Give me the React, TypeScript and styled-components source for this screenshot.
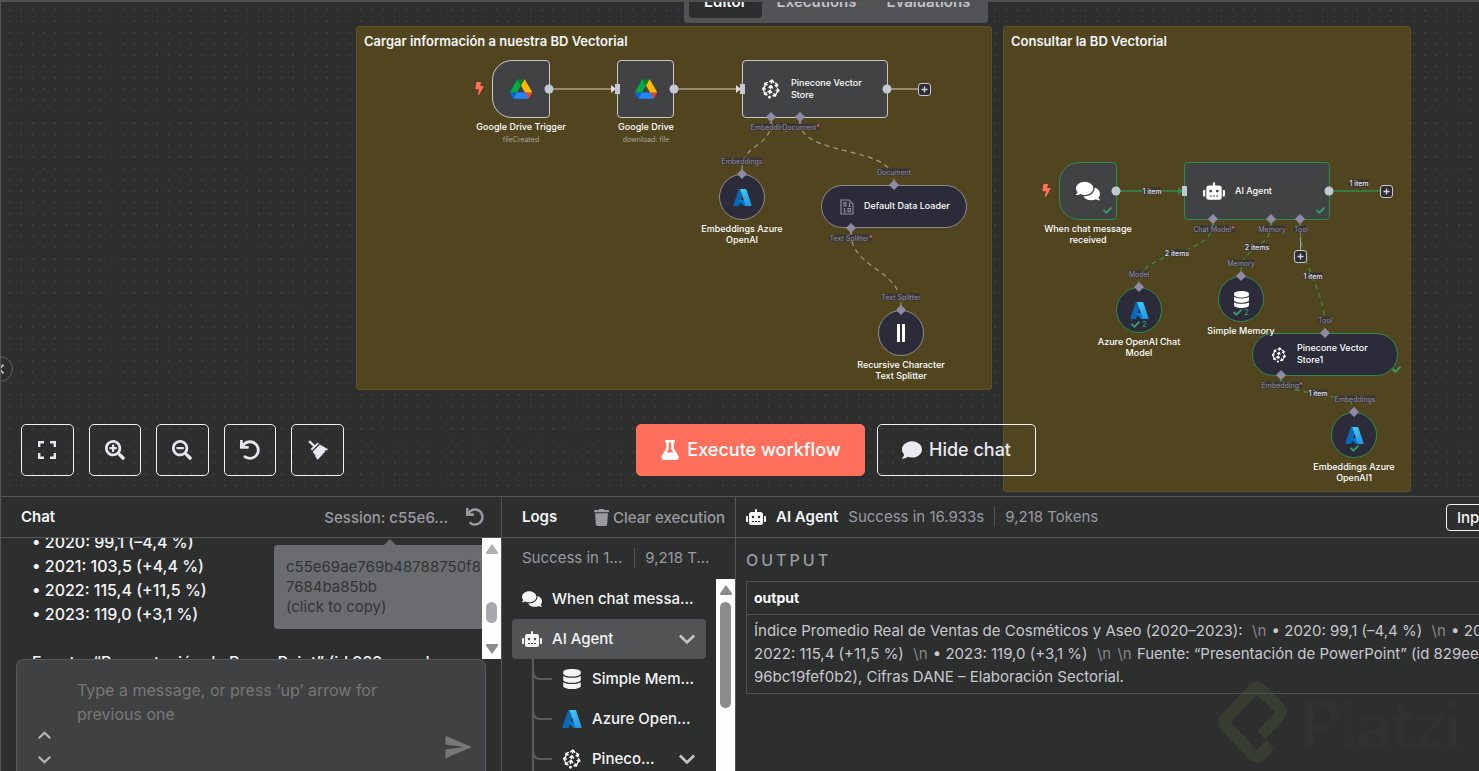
import React from 'react';
import styled, { createGlobalStyle, css } from 'styled-components';
import {
  FaBolt,
  FaCheck,
  FaComment,
  FaComments,
  FaDatabase,
  FaFlask,
  FaRobot,
  FaSearchMinus,
  FaSearchPlus,
  FaTrash,
  FaUndo,
} from 'react-icons/fa';
import { MdSend } from 'react-icons/md';

const c = {
  bg: '#2d2e2e',
  line: '#545555',
  sticky: '#51451f',
  stickyBorder: '#5e5122',
  node: '#414244',
  sub: '#2b2b39',
  nodeBorder: '#c9c8c4',
  subBorder: '#8f8d8c',
  green: '#2f8a50',
  check: '#35a274',
  handle: '#c4c8d4',
  diamond: '#8f8ba6',
  white: '#ffffff',
  text: '#f4f5f7',
  muted: '#9a9ba1',
  coral: '#ff6f5c',
};

const GlobalStyle = createGlobalStyle`
  *, *::before, *::after { box-sizing: border-box; }
  body {
    margin: 0;
    background: ${c.bg};
    color: ${c.text};
    font-family: Inter, "Liberation Sans", sans-serif;
  }
  button, textarea { font: inherit; color: inherit; }
  svg { display: block; flex: none; }
`;

const Page = styled.div`
  display: flex;
  flex-direction: column;
  height: 100vh;
  overflow: hidden;
  border-left: 1px solid ${c.line};
`;

/* ---------- canvas ---------- */

const Canvas = styled.main`
  position: relative;
  flex: 1;
  min-height: 0;
  overflow: hidden;
  border-top: 2px solid #505152;
`;

const Flow = styled.div`
  position: absolute;
  top: -2px;
  left: -1px;
`;

const Dots = styled.svg`
  position: absolute;
  inset: 0;
  width: 100%;
  height: 100%;
`;

const Wires = styled.svg`
  position: absolute;
  top: 0;
  left: 0;
`;

const Tabs = styled.nav`
  position: absolute;
  top: -16px;
  left: 683px;
  display: flex;
  padding: 4px 3px 5px 5px;
  background: #525355;
  border-radius: 4px;
`;

const Tab = styled.button<{ $active?: boolean }>`
  height: 28px;
  padding: 0 15px 4px;
  border: 0;
  border-radius: 4px;
  background: ${(p) => (p.$active ? c.bg : 'transparent')};
  color: ${(p) => (p.$active ? c.white : '#c0c2cb')};
  font-size: 15px;
  font-weight: 600;
  line-height: 24px;
`;

const Sticky = styled.section<{ $x: number; $w: number; $h: number }>`
  position: absolute;
  left: ${(p) => p.$x}px;
  top: 26px;
  width: ${(p) => p.$w}px;
  height: ${(p) => p.$h}px;
  padding: 6px 7px;
  border: 1px solid ${c.stickyBorder};
  border-radius: 3px;
  background: ${c.sticky};
`;

const StickyTitle = styled.h2`
  margin: 0;
  font-size: 13px;
  font-weight: 600;
  line-height: 16px;
  white-space: nowrap;
`;

type Shape = 'square' | 'trigger' | 'pill' | 'circle';

const Node = styled.div<{ $x: number; $y: number; $w: number; $shape: Shape; $done?: boolean }>`
  position: absolute;
  left: ${(p) => p.$x}px;
  top: ${(p) => p.$y}px;
  width: ${(p) => p.$w}px;
  display: flex;
  align-items: center;
  justify-content: ${(p) => (p.$w > 100 ? 'flex-start' : 'center')};
  padding-left: ${(p) => (p.$w > 100 ? 18 : 0)}px;
  gap: 10px;
  font-size: 9px;
  font-weight: 500;
  line-height: 12px;
  color: ${c.white};
  ${(p) =>
    (p.$shape === 'square' || p.$shape === 'trigger') &&
    css`
      height: 58px;
      background: ${c.node};
      border: 1px solid ${p.$done ? c.green : c.nodeBorder};
      border-radius: ${p.$shape === 'trigger' ? '20px 4px 4px 20px' : '4px'};
    `}
  ${(p) =>
    (p.$shape === 'pill' || p.$shape === 'circle') &&
    css`
      height: ${p.$shape === 'pill' ? 43 : 46}px;
      background: ${c.sub};
      border: 1px solid ${p.$done ? c.green : c.subBorder};
      border-radius: 23px;
    `}
`;

const NodeText = styled.span<{ $w: number }>`
  width: ${(p) => p.$w}px;
  padding-bottom: 1px;
`;

const Caption = styled.div<{ $x: number; $y: number }>`
  position: absolute;
  left: ${(p) => p.$x}px;
  top: ${(p) => p.$y}px;
  transform: translateX(-50%);
  text-align: center;
  white-space: nowrap;
  font-size: 9px;
  font-weight: 500;
  line-height: 11px;
  color: ${c.white};
`;

const Sub = styled.div`
  font-size: 7px;
  font-weight: 400;
  line-height: 15px;
  color: #aaa799;
`;

const PortLabel = styled.span<{ $x: number; $y: number; $bright?: boolean }>`
  position: absolute;
  left: ${(p) => p.$x}px;
  top: ${(p) => p.$y}px;
  transform: translate(-50%, -50%);
  white-space: nowrap;
  background: #3a3633;
  color: ${(p) => (p.$bright ? '#e2e2e6' : '#918da3')};
  font-size: 7px;
  font-weight: ${(p) => (p.$bright ? 500 : 400)};
  line-height: 7px;
`;

const Required = styled.span`
  color: ${c.coral};
`;

const Badge = styled.span<{ $x: number; $y: number }>`
  position: absolute;
  left: ${(p) => p.$x}px;
  top: ${(p) => p.$y}px;
  display: flex;
  align-items: center;
  gap: 2px;
  color: ${c.check};
  font-size: 8px;
  line-height: 9px;
`;

const BoltMark = styled.span<{ $x: number; $y: number }>`
  position: absolute;
  left: ${(p) => p.$x}px;
  top: ${(p) => p.$y}px;
  color: ${c.coral};
`;

const AddButton = styled.button<{ $x: number; $y: number }>`
  position: absolute;
  left: ${(p) => p.$x}px;
  top: ${(p) => p.$y}px;
  width: 13px;
  height: 13px;
  display: grid;
  place-items: center;
  padding: 0;
  border: 1px solid #c9c8cc;
  border-radius: 3px;
  background: #2d2d33;
`;

const Collapse = styled.button`
  position: absolute;
  left: -14px;
  top: 354px;
  width: 26px;
  height: 26px;
  display: grid;
  place-items: center;
  padding: 0;
  border: 1px solid #5f6061;
  border-radius: 13px;
  background: ${c.bg};
`;

const Controls = styled.div`
  position: absolute;
  left: 20px;
  bottom: 20px;
  display: flex;
  align-items: center;
`;

const ViewTools = styled.div`
  display: grid;
  grid-template-columns: repeat(5, 1fr);
  gap: 15px;
  width: 323px;
  margin-right: 292px;
`;

const ToolButton = styled.button`
  height: 52px;
  display: grid;
  place-items: center;
  padding: 0;
  border: 1px solid #f0f1f4;
  border-radius: 5px;
  background: transparent;
  color: #e4e7ef;
`;

const Action = styled.button<{ $primary?: boolean }>`
  height: 52px;
  width: ${(p) => (p.$primary ? 229 : 159)}px;
  display: flex;
  align-items: center;
  justify-content: center;
  gap: 7px;
  margin-right: 12px;
  padding: 0 0 1px;
  border: 1px solid ${(p) => (p.$primary ? c.coral : '#f0f1f4')};
  border-radius: 5px;
  background: ${(p) => (p.$primary ? c.coral : 'transparent')};
  color: ${(p) => (p.$primary ? c.white : '#e8eaf1')};
  font-size: 18px;
  font-weight: 500;
`;

/* ---------- bottom panels ---------- */

const Bottom = styled.div`
  display: grid;
  grid-template-columns: 501px 234px minmax(0, 1fr);
  height: 275px;
  border-top: 1px solid ${c.line};
`;

const Panel = styled.section`
  display: flex;
  flex-direction: column;
  min-width: 0;
  min-height: 0;
  overflow: hidden;
  border-right: 1px solid ${c.line};
  &:last-child { border-right: 0; }
`;

const PanelHeader = styled.header<{ $left?: number }>`
  display: flex;
  align-items: center;
  flex: none;
  height: 41px;
  padding-left: ${(p) => p.$left ?? 20}px;
  border-bottom: 1px solid ${c.line};
  white-space: nowrap;
`;

const PanelTitle = styled.h3`
  margin: 0;
  padding-bottom: 2px;
  font-size: 15px;
  font-weight: 600;
`;

const GhostButton = styled.button<{ $right?: number }>`
  display: flex;
  align-items: center;
  gap: 3px;
  margin-left: auto;
  margin-right: ${(p) => p.$right ?? 0}px;
  padding: 0;
  border: 0;
  background: none;
  color: ${c.muted};
  font-size: 15px;
  font-weight: 500;
`;

const IconButton = styled.button<{ $right?: number }>`
  display: grid;
  place-items: center;
  margin-right: ${(p) => p.$right ?? 0}px;
  padding: 0;
  border: 0;
  background: none;
  color: ${c.muted};
`;

const ChatBody = styled.div`
  position: relative;
  display: flex;
  height: 121px;
  overflow: hidden;
`;

const Message = styled.div`
  flex: 1;
  min-width: 0;
  margin-top: -8px;
  padding-left: 31px;
  overflow: hidden;
  white-space: nowrap;
  font-size: 16px;
  font-weight: 500;
  line-height: 24px;
  ul { margin: 0 0 24px; padding: 0; list-style: none; }
  p { margin: 0; }
`;

const Tooltip = styled.div`
  position: absolute;
  left: 273px;
  top: 7px;
  width: 220px;
  height: 84px;
  padding: 12px;
  border-radius: 4px;
  background: #6b6c6f;
  color: #333436;
  font-size: 15px;
  line-height: 20px;
  white-space: nowrap;
  &::before {
    content: '';
    position: absolute;
    left: 110px;
    top: -6px;
    border: 6px solid transparent;
    border-top: 0;
    border-bottom-color: #6b6c6f;
  }
`;

const Scrollbar = styled.div`
  position: relative;
  flex: none;
  width: 19px;
  display: flex;
  flex-direction: column;
  align-items: center;
  padding: 6px 0 5px;
  background: #fdfdfe;
`;

const Thumb = styled.div<{ $gap: number; $h: number; $c: string }>`
  width: 11px;
  height: ${(p) => p.$h}px;
  margin-top: ${(p) => p.$gap}px;
  flex: none;
  border-radius: 6px;
  background: ${(p) => p.$c};
`;

const ArrowEnd = styled.div`
  margin-top: auto;
`;

const Composer = styled.form`
  position: relative;
  flex: 1;
  display: flex;
  margin: 0 15px;
  padding: 18px 12px 0 21px;
  border: 1px solid #57585b;
  border-bottom: 0;
  border-radius: 8px 8px 0 0;
  background: #404142;
`;

const HistoryArrows = styled.div`
  display: flex;
  flex-direction: column;
  align-items: flex-start;
  align-self: flex-end;
  gap: 11px;
  width: 39px;
  padding-bottom: 5px;
`;

const Field = styled.textarea`
  flex: 1;
  min-width: 0;
  height: 60px;
  padding: 0;
  border: 0;
  resize: none;
  outline: none;
  overflow: hidden;
  background: none;
  font-size: 16px;
  line-height: 24px;
  &::placeholder { color: #76777a; opacity: 1; }
`;

const SendButton = styled(IconButton)`
  align-self: flex-end;
  margin-bottom: 9px;
  color: #77787c;
`;

const Summary = styled.div`
  display: flex;
  align-items: center;
  height: 41px;
  padding: 0 0 2px 20px;
  color: ${c.muted};
  font-size: 15px;
  white-space: nowrap;
`;

const Divider = styled.span<{ $gap?: number }>`
  width: 1px;
  height: 20px;
  margin: 0 10px 0 ${(p) => p.$gap ?? 10}px;
  background: ${c.line};
`;

const LogArea = styled.div`
  flex: 1;
  display: flex;
  min-height: 0;
  overflow: hidden;
`;

const LogList = styled.ul`
  flex: 1;
  margin: 0;
  padding: 0 10px;
  list-style: none;
`;

const LogRow = styled.button<{ $active?: boolean }>`
  display: flex;
  align-items: center;
  gap: 10px;
  width: 100%;
  height: 40px;
  padding: 0 11px 0 10px;
  border: 0;
  border-radius: 4px;
  background: ${(p) => (p.$active ? '#525355' : 'transparent')};
  font-size: 15px;
  font-weight: 500;
  text-align: left;
  white-space: nowrap;
`;

const RowText = styled.span`
  flex: 1;
  padding-bottom: 2px;
`;

const IconBox = styled.span`
  display: grid;
  place-items: center;
  width: 20px;
  height: 20px;
`;

const Branch = styled.li`
  display: flex;
  height: 40px;
  padding-left: 20px;
`;

const BranchLine = styled.svg`
  width: 20px;
  height: 40px;
`;

const Muted = styled.span`
  padding-bottom: 2px;
  color: ${c.muted};
  font-size: 15px;
`;

const ToggleButton = styled.button`
  flex: none;
  width: 60px;
  height: 27px;
  margin-left: auto;
  margin-right: -27px;
  padding: 0 10px;
  border: 1px solid #f0f1f4;
  border-radius: 4px;
  background: none;
  font-size: 15px;
  font-weight: 500;
  text-align: left;
`;

const DetailTitle = styled(PanelTitle)`
  margin: 0 10px;
`;

const OutputBody = styled.div`
  position: relative;
  flex: 1;
  padding-left: 10px;
  overflow: hidden;
`;

const OutputTitle = styled.h4`
  margin: 0;
  height: 43px;
  color: ${c.muted};
  font-size: 16px;
  font-weight: 500;
  letter-spacing: 3px;
  line-height: 44px;
`;

const DataTable = styled.table`
  position: relative;
  width: calc(100% + 40px);
  border-collapse: collapse;
  white-space: nowrap;
  font-size: 15px;
  line-height: 23px;
  th, td { padding: 4px 7px 5px; border: 1px solid #4e5050; text-align: left; }
  th { font-size: 14px; font-weight: 700; color: ${c.white}; }
  td { color: #c7c9ce; }
`;

const Esc = styled.span`
  padding: 0 1px;
  color: #858689;
`;

const Watermark = styled.div`
  position: absolute;
  right: 0;
  bottom: 6px;
  width: 261px;
  display: flex;
  align-items: center;
  gap: 12px;
  color: #303131;
  font-family: Lato, sans-serif;
  font-size: 66px;
  font-weight: 700;
  line-height: 80px;
`;

/* ---------- drawings ---------- */

const DriveIcon = () => (
  <svg width="22" height="20" viewBox="0 0 87.3 78">
    <path fill="#0066da" d="m6.6 66.85 3.85 6.65c.8 1.4 1.95 2.5 3.3 3.3l13.75-23.8h-27.5c0 1.55.4 3.1 1.2 4.5z" />
    <path fill="#00ac47" d="m43.65 25-13.75-23.8c-1.35.8-2.5 1.9-3.3 3.3l-25.4 44a9.06 9.06 0 0 0-1.2 4.5h27.5z" />
    <path fill="#ea4335" d="m73.55 76.8c1.35-.8 2.5-1.9 3.3-3.3l1.6-2.75 7.65-13.25c.8-1.4 1.2-2.95 1.2-4.5h-27.502l5.852 11.5z" />
    <path fill="#00832d" d="m43.65 25 13.75-23.8c-1.35-.8-2.9-1.2-4.5-1.2h-18.5c-1.6 0-3.15.45-4.5 1.2z" />
    <path fill="#2684fc" d="m59.8 53h-32.3l-13.75 23.8c1.35.8 2.9 1.2 4.5 1.2h50.8c1.6 0 3.15-.45 4.5-1.2z" />
    <path fill="#ffba00" d="m73.4 26.5-12.7-22c-.8-1.4-1.95-2.5-3.3-3.3l-13.75 23.8 16.15 28h27.45c0-1.55-.4-3.1-1.2-4.5z" />
  </svg>
);

const AzureIcon = ({ size = 19 }: { size?: number }) => (
  <svg width={size} height={size} viewBox="2 4 92 88">
    <defs>
      <linearGradient id="azLeft" x1="60%" y1="0%" x2="25%" y2="100%">
        <stop offset="0" stopColor="#1565ad" />
        <stop offset="1" stopColor="#0669bc" />
      </linearGradient>
      <linearGradient id="azRight" x1="30%" y1="0%" x2="70%" y2="100%">
        <stop offset="0" stopColor="#3ccbf4" />
        <stop offset="1" stopColor="#2892df" />
      </linearGradient>
    </defs>
    <path fill="url(#azLeft)" d="M33.338 6.544h26.038l-27.03 80.087a4.152 4.152 0 0 1-3.933 2.824H8.149a4.145 4.145 0 0 1-3.928-5.47L29.404 9.368a4.152 4.152 0 0 1 3.934-2.825z" />
    <path fill="#0078d4" d="M71.175 60.261h-41.29a1.911 1.911 0 0 0-1.305 3.309l26.532 24.764a4.171 4.171 0 0 0 2.846 1.121h23.38z" />
    <path fill="url(#azRight)" d="M66.595 9.364a4.145 4.145 0 0 0-3.928-2.82H33.648a4.146 4.146 0 0 1 3.928 2.82l25.184 74.62a4.146 4.146 0 0 1-3.928 5.472h29.02a4.146 4.146 0 0 0 3.927-5.472z" />
  </svg>
);

const PineconeIcon = ({ size = 20 }: { size?: number }) => (
  <svg width={size} height={size} viewBox="0 0 20 20" fill="none" stroke="#fff" strokeWidth="1.5" strokeLinecap="round" strokeLinejoin="round">
    <path d="M10.9 1.2 10.5 4M8.8 2.7l2.2-1.7 1.6 2.3" />
    <path d="M9.9 7.2 9.4 9.5M8 8.3l2-1.6 1.4 2.2" />
    <path d="M9.1 11.8 8.6 14.5M7.1 12.9l2.1-1.6 1.4 2.2" />
    <path d="M6 5.9 4.2 4.6M6.3 3.6l-2.4.8.1 2.3" />
    <path d="M14.2 6.7l2-.9M14.6 4.3l2 1.4-.9 2.2" />
    <path d="M4.3 10 2.2 9.6M3.6 7.8 1.8 9.6l1.1 2.2" />
    <path d="M15.2 11.6l2.4.4M16.6 9.9l1.3 2.1-2.1 1.5" />
    <path d="M5.3 13.8l-1.6 1.3M3.4 12.9l.1 2.4 2.4.5" />
    <path d="M13 14.8l1.2 1.9M15.2 14.7l-.8 2.3-2.4-.2" />
    <circle cx="8.5" cy="18.2" r=".7" fill="#fff" />
  </svg>
);

const FileBinaryIcon = () => (
  <svg width="14" height="16" viewBox="0 0 14 16" fill="none" stroke="#8e8c9a" strokeWidth="1.2">
    <path d="M1 1h8l4 4v10H1z" />
    <path d="M4 3.5h2v3.5H4zM9.5 3.5V7.5M4.5 9v4M8 9.5h2.4v3.2H8zM3.5 13h2.5M8.5 7.5h2.4" />
  </svg>
);

const SplitIcon = () => (
  <svg width="8" height="18" viewBox="0 0 8 18" fill="#fff">
    <path d="M0 0h3v18H0zM5 0h3v18H5z" />
  </svg>
);

const ExpandIcon = () => (
  <svg width="18" height="18" viewBox="0 0 18 18" fill="none" stroke="currentColor" strokeWidth="2.4">
    <path d="M1.2 6V1.2H6M12 1.2h4.8V6M16.8 12v4.8H12M6 16.8H1.2V12" />
  </svg>
);

const BroomIcon = () => (
  <svg width="20" height="20" viewBox="0 0 20 20" fill="currentColor">
    <path d="M2 .2 6.7 4.9 9.6 2.4l1.3 1.3-6.9 6.7-1.3-1.3 2.5-2.7L.2 2z" />
    <path d="M4.8 11.4 11.9 4.6 20 9.2l-1 1.1-1.6-.3-.5 1.9-1.3 1.4L9.6 20l-1.4-2.6-1-.8.2-1.6-1.5-.9z" />
  </svg>
);

const Chevron = ({ dir = 'down', w = 14, color = '#c2c4ca' }: { dir?: 'up' | 'down' | 'left'; w?: number; color?: string }) => (
  <svg width={w} height={w} viewBox="0 0 14 14" fill="none" stroke={color} strokeWidth="2.4">
    <path d={dir === 'down' ? 'M.8 4 7 10l6.2-6' : dir === 'up' ? 'M.8 10 7 4l6.2 6' : 'M12 1 6 7l6 6'} />
  </svg>
);

const PlusIcon = () => (
  <svg width="7" height="7" viewBox="0 0 7 7" stroke="#d4d5dc" strokeWidth="1.3">
    <path d="M3.5.5v6M.5 3.5h6" />
  </svg>
);

const Triangle = ({ up, color = '#8b8b8b' }: { up?: boolean; color?: string }) => (
  <svg width="12" height="10" viewBox="0 0 12 10" fill={color}>
    <path d={up ? 'M6 0 12 8.5q.2 1.5-1 1.5H1Q-.2 10 0 8.5z' : 'M6 10 12 1.5Q12.2 0 11 0H1Q-.2 0 0 1.5z'} />
  </svg>
);

const PlatziMark = () => (
  <svg width="70" height="84" viewBox="0 0 70 84" fill="#373d30" fillRule="evenodd">
    <path d="M32 3q7-6 14 0L66 23q6 8 0 15L48 58l8 10-10 11q-7 6-14 0L3 49q-6-8 0-15zM39 14 13 41l26 28 9-10-9-9 18-19z" />
  </svg>
);

const diamonds: [number, number][] = [
  [771, 117], [800, 117], [742, 174], [894, 185], [851, 228], [901, 310],
  [1213, 219], [1271, 219], [1300, 219], [1139, 287], [1241, 276], [1325, 333], [1281, 375], [1354, 412],
];

const dashedGrey = [
  'M771 122C771 148 742 143 742 170',
  'M800 122C800 157 894 145 894 181',
  'M851 232C851 270 901 268 901 306',
];

const dashedGreen = [
  'M1213 224C1213 257 1139 250 1139 283',
  'M1271 224C1271 250 1241 245 1241 272',
  'M1300 224C1300 270 1325 285 1325 329',
  'M1281 380C1281 396 1354 392 1354 408',
];

const Ports = () => (
  <Wires width="1479" height="496" fill="none">
    {diamonds.map(([x, y]) => (
      <path key={`${x}-${y}`} d={`M${x} ${y - 5}l5 5-5 5-5-5z`} fill={c.diamond} />
    ))}
    <g fill={c.handle}>
      <circle cx="549" cy="89" r="4.5" />
      <circle cx="674" cy="89" r="4.5" />
      <circle cx="887" cy="89" r="4.5" />
      <circle cx="1116" cy="191" r="4.5" />
      <circle cx="1329" cy="191" r="4.5" />
      <path d="M615 84h5v10h-5zM740 84h5v10h-5zM1182 186h5v10h-5z" />
    </g>
  </Wires>
);

const Connections = () => (
  <Wires width="1479" height="496" fill="none">
    <g stroke="#aaa38f" strokeWidth="1.6">
      <path d="M549 89H612M674 89H737M887 89h31" />
    </g>
    <path d="M611 85l5 4-5 4zM736 85l5 4-5 4z" fill="#dddbd6" />
    <g stroke={c.green} strokeWidth="1.6">
      <path d="M1116 191h64M1329 191h51" />
    </g>
    <path d="M1178 187l5 4-5 4z" fill={c.green} />
    <path d="M1300.5 224v26" stroke="#aaa6a6" />
    <path d="M768 126l3-5 3 5zM797 126l3-5 3 5zM848 237l3-5 3 5z" fill="#a5a2a8" />
    <path d="M1210 228l3-5 3 5zM1268 228l3-5 3 5zM1297 228l3-5 3 5zM1278 384l3-5 3 5z" fill={c.check} />
    <g stroke="#9c9785" strokeWidth="1.2" strokeDasharray="5 4">
      {dashedGrey.map((d) => <path key={d} d={d} />)}
    </g>
    <g stroke="#3c9144" strokeWidth="1.2" strokeDasharray="5 4">
      {dashedGreen.map((d) => <path key={d} d={d} />)}
    </g>
  </Wires>
);

const portLabels: { x: number; y: number; t: string; req?: boolean; bright?: boolean }[] = [
  { x: 771, y: 127, t: 'Embedding', req: true },
  { x: 801, y: 127, t: 'Document', req: true },
  { x: 742, y: 161, t: 'Embeddings' },
  { x: 894, y: 172, t: 'Document' },
  { x: 851, y: 238, t: 'Text Splitter', req: true },
  { x: 901, y: 297, t: 'Text Splitter' },
  { x: 1214, y: 229, t: 'Chat Model', req: true },
  { x: 1272, y: 229, t: 'Memory' },
  { x: 1301, y: 229, t: 'Tool' },
  { x: 1241, y: 263, t: 'Memory' },
  { x: 1139, y: 274, t: 'Model' },
  { x: 1325, y: 320, t: 'Tool' },
  { x: 1282, y: 385, t: 'Embedding', req: true },
  { x: 1355, y: 399, t: 'Embeddings' },
  { x: 1152, y: 191, t: '1 item', bright: true },
  { x: 1359, y: 183, t: '1 item', bright: true },
  { x: 1177, y: 253, t: '2 items', bright: true },
  { x: 1257, y: 247, t: '2 items', bright: true },
  { x: 1313, y: 276, t: '1 item', bright: true },
  { x: 1318, y: 393, t: '1 item', bright: true },
];

function Workflow() {
  return (
    <Flow>
      <Sticky $x={356} $w={636} $h={364}>
        <StickyTitle>Cargar información a nuestra BD Vectorial</StickyTitle>
      </Sticky>
      <Sticky $x={1003} $w={408} $h={466}>
        <StickyTitle>Consultar la BD Vectorial</StickyTitle>
      </Sticky>
      <Connections />

      <BoltMark $x={473} $y={82}><FaBolt size={13} /></BoltMark>
      <Node $x={492} $y={60} $w={58} $shape="trigger"><DriveIcon /></Node>
      <Caption $x={521} $y={121}>Google Drive Trigger<Sub>fileCreated</Sub></Caption>
      <Node $x={617} $y={60} $w={57} $shape="square"><DriveIcon /></Node>
      <Caption $x={646} $y={121}>Google Drive<Sub>download: file</Sub></Caption>
      <Node $x={742} $y={60} $w={146} $shape="square">
        <PineconeIcon /><NodeText $w={80}>Pinecone Vector Store</NodeText>
      </Node>
      <AddButton $x={918} $y={83} aria-label="Add node"><PlusIcon /></AddButton>

      <Node $x={719} $y={174} $w={46} $shape="circle"><AzureIcon /></Node>
      <Caption $x={742} $y={223}>Embeddings Azure<br />OpenAI</Caption>
      <Node $x={821} $y={185} $w={146} $shape="pill">
        <FileBinaryIcon /><NodeText $w={100}>Default Data Loader</NodeText>
      </Node>
      <Node $x={878} $y={310} $w={46} $shape="circle"><SplitIcon /></Node>
      <Caption $x={901} $y={359}>Recursive Character<br />Text Splitter</Caption>

      <BoltMark $x={1040} $y={184}><FaBolt size={13} /></BoltMark>
      <Node $x={1059} $y={162} $w={58} $shape="trigger" $done><FaComments size={24} /></Node>
      <Caption $x={1088} $y={223}>When chat message<br />received</Caption>
      <Badge $x={1103} $y={206}><FaCheck size={9} /></Badge>
      <Node $x={1184} $y={162} $w={146} $shape="square" $done>
        <FaRobot size={22} /><NodeText $w={80}>AI Agent</NodeText>
      </Node>
      <Badge $x={1316} $y={206}><FaCheck size={9} /></Badge>
      <AddButton $x={1380} $y={185} aria-label="Add node"><PlusIcon /></AddButton>
      <AddButton $x={1294} $y={250} aria-label="Add tool"><PlusIcon /></AddButton>

      <Node $x={1116} $y={287} $w={46} $shape="circle" $done><AzureIcon /></Node>
      <Badge $x={1131} $y={320}><FaCheck size={9} />2</Badge>
      <Caption $x={1139} $y={336}>Azure OpenAI Chat<br />Model</Caption>
      <Node $x={1218} $y={276} $w={46} $shape="circle" $done><FaDatabase size={17} /></Node>
      <Badge $x={1233} $y={308}><FaCheck size={9} />2</Badge>
      <Node $x={1252} $y={333} $w={146} $shape="pill" $done>
        <PineconeIcon size={16} /><NodeText $w={80}>Pinecone Vector Store1</NodeText>
      </Node>
      <Caption $x={1241} $y={325}>Simple Memory</Caption>
      <Badge $x={1392} $y={365}><FaCheck size={9} /></Badge>
      <Node $x={1331} $y={412} $w={46} $shape="circle" $done><AzureIcon /></Node>
      <Badge $x={1350} $y={444}><FaCheck size={9} /></Badge>
      <Caption $x={1354} $y={461}>Embeddings Azure<br />OpenAI1</Caption>

      <Ports />
      {portLabels.map((p, i) => (
        <PortLabel key={i} $x={p.x} $y={p.y} $bright={p.bright}>
          {p.t}{p.req && <Required>*</Required>}
        </PortLabel>
      ))}
    </Flow>
  );
}

export default function App() {
  return (
    <>
      <GlobalStyle />
      <Page>
        <Canvas>
          <Dots>
            <defs>
              <pattern id="dots" x="8" y="7" width="11.32" height="11.32" patternUnits="userSpaceOnUse">
                <circle cx="1" cy="1" r="0.65" fill="#5a5b5c" />
              </pattern>
            </defs>
            <rect width="100%" height="100%" fill="url(#dots)" />
          </Dots>
          <Workflow />
          <Tabs>
            <Tab $active>Editor</Tab>
            <Tab>Executions</Tab>
            <Tab>Evaluations</Tab>
          </Tabs>
          <Collapse aria-label="Expand menu"><Chevron dir="left" w={10} /></Collapse>
          <Controls>
            <ViewTools>
              <ToolButton aria-label="Fit view"><ExpandIcon /></ToolButton>
              <ToolButton aria-label="Zoom in"><FaSearchPlus size={20} /></ToolButton>
              <ToolButton aria-label="Zoom out"><FaSearchMinus size={20} /></ToolButton>
              <ToolButton aria-label="Reset zoom"><FaUndo size={20} /></ToolButton>
              <ToolButton aria-label="Tidy up"><BroomIcon /></ToolButton>
            </ViewTools>
            <Action $primary><FaFlask size={20} />Execute workflow</Action>
            <Action><FaComment size={20} />Hide chat</Action>
          </Controls>
        </Canvas>

        <Bottom>
          <Panel>
            <PanelHeader>
              <PanelTitle>Chat</PanelTitle>
              <GhostButton $right={18}>Session: c55e6...</GhostButton>
              <IconButton $right={17} aria-label="Reset session"><FaUndo size={18} /></IconButton>
            </PanelHeader>
            <ChatBody>
              <Message>
                <ul>
                  <li>• 2020: 99,1 (–4,4 %)</li>
                  <li>• 2021: 103,5 (+4,4 %)</li>
                  <li>• 2022: 115,4 (+11,5 %)</li>
                  <li>• 2023: 119,0 (+3,1 %)</li>
                </ul>
                <p>Fuente: “Presentación de PowerPoint” (id 829eecad</p>
              </Message>
              <Tooltip>
                c55e69ae769b48788750f8<br />7684ba85bb<br />(click to copy)
              </Tooltip>
              <Scrollbar>
                <Triangle up color="#adafb2" />
                <Thumb $gap={48} $h={21} $c="#a6a8ac" />
                <ArrowEnd><Triangle /></ArrowEnd>
              </Scrollbar>
            </ChatBody>
            <Composer>
              <HistoryArrows>
                <IconButton type="button" aria-label="Previous message"><Chevron dir="up" w={13} color="#b4b5ba" /></IconButton>
                <IconButton type="button" aria-label="Next message"><Chevron w={13} color="#b4b5ba" /></IconButton>
              </HistoryArrows>
              <Field aria-label="Message" placeholder="Type a message, or press ‘up’ arrow for previous one" />
              <SendButton type="button" aria-label="Send"><MdSend size={30} /></SendButton>
            </Composer>
          </Panel>

          <Panel>
            <PanelHeader>
              <PanelTitle>Logs</PanelTitle>
              <GhostButton $right={10}><FaTrash size={17} />Clear execution</GhostButton>
            </PanelHeader>
            <Summary>Success in 1...<Divider $gap={12} />9,218 T...</Summary>
            <LogArea>
              <LogList>
                <li><LogRow><FaComments size={20} /><RowText>When chat messa...</RowText></LogRow></li>
                <li><LogRow $active><FaRobot size={20} /><RowText>AI Agent</RowText><Chevron w={16} /></LogRow></li>
                {[
                  { icon: <FaDatabase size={20} />, text: 'Simple Mem...' },
                  { icon: <AzureIcon size={20} />, text: 'Azure Open...' },
                  { icon: <PineconeIcon />, text: 'Pineco...', open: true },
                ].map((r) => (
                  <Branch key={r.text}>
                    <BranchLine viewBox="0 0 20 40" fill="none" stroke="#5b5c5e" strokeWidth="2">
                      <path d="M1 0v40M1 11q0 9 8 9h11" />
                    </BranchLine>
                    <LogRow><IconBox>{r.icon}</IconBox><RowText>{r.text}</RowText>{r.open && <Chevron w={16} />}</LogRow>
                  </Branch>
                ))}
              </LogList>
              <Scrollbar>
                <Triangle up />
                <Thumb $gap={7} $h={106} $c="#8b8b8b" />
              </Scrollbar>
            </LogArea>
          </Panel>

          <Panel>
            <PanelHeader $left={10}>
              <FaRobot size={20} />
              <DetailTitle>AI Agent</DetailTitle>
              <Muted>Success in 16.933s</Muted>
              <Divider />
              <Muted>9,218 Tokens</Muted>
              <ToggleButton>Input</ToggleButton>
            </PanelHeader>
            <OutputBody>
              <OutputTitle>OUTPUT</OutputTitle>
              <Watermark aria-hidden="true">
                <PlatziMark />
                Platzi
              </Watermark>
              <DataTable>
                <thead><tr><th>output</th></tr></thead>
                <tbody>
                  <tr>
                    <td>
                      Índice Promedio Real de Ventas de Cosméticos y Aseo (2020–2023): &nbsp;<Esc>\n</Esc> • 2020: 99,1 (–4,4 %) &nbsp;<Esc>\n</Esc> • 2021: 103,5<br />
                      2022: 115,4 (+11,5 %) &nbsp;<Esc>\n</Esc> • 2023: 119,0 (+3,1 %) &nbsp;<Esc>\n</Esc> <Esc>\n</Esc> Fuente: “Presentación de PowerPoint” (id 829eecad<br />
                      96bc19fef0b2), Cifras DANE – Elaboración Sectorial.
                    </td>
                  </tr>
                </tbody>
              </DataTable>
            </OutputBody>
          </Panel>
        </Bottom>
      </Page>
    </>
  );
}
